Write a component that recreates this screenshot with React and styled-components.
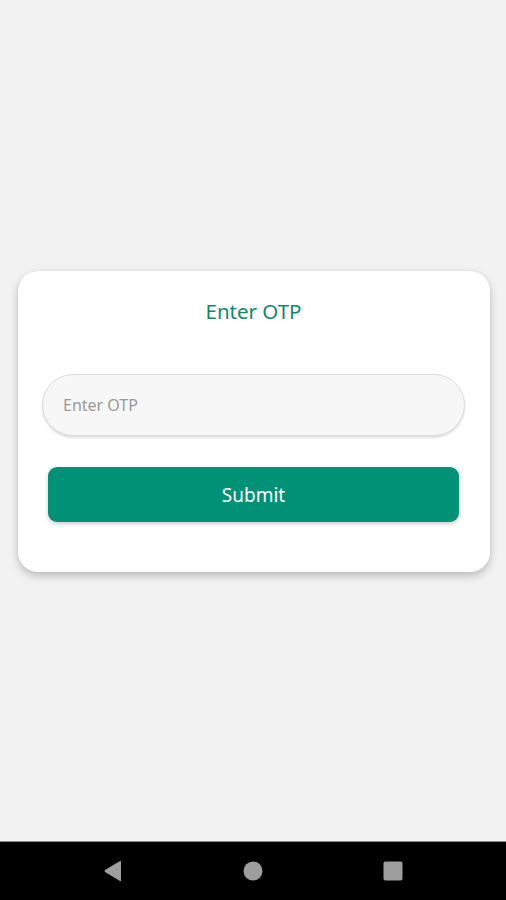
import React from "react";
import styled, { createGlobalStyle } from "styled-components";

const Global = createGlobalStyle`
  html, body { margin: 0; padding: 0; background: #f2f2f2; }
  body { font-family: "Noto Sans", "Open Sans", sans-serif; }
  * { box-sizing: border-box; }
`;

const Screen = styled.div`
  height: 900px;
  display: flex;
  flex-direction: column;
`;

const Main = styled.main`
  flex: 1;
  display: flex;
  align-items: center;
  justify-content: center;
  padding: 2px 16px 0 18px;
`;

const Card = styled.div`
  width: 472px;
  background: #ffffff;
  border-radius: 20px;
  padding: 27px 25px 50px 24px;
  display: flex;
  flex-direction: column;
  box-shadow: 0 4px 8px rgba(0, 0, 0, 0.22), 0 0 3px rgba(0, 0, 0, 0.06);
`;

const Title = styled.h1`
  margin: 0 0 50px;
  text-align: center;
  font-size: 20.5px;
  line-height: 26px;
  font-weight: 400;
  color: #10896a;
`;

const Input = styled.input`
  height: 62px;
  width: 100%;
  border-radius: 31px;
  border: 1px solid #dcdcdc;
  background: #f7f7f7;
  padding: 0 20px;
  font-family: inherit;
  font-size: 16px;
  color: #333;
  outline: none;
  box-shadow: 0 2px 2px rgba(0, 0, 0, 0.12);
  &::placeholder { color: #9a9a9a; }
`;

const Button = styled.button`
  margin: 31px 6px 0 6px;
  height: 55px;
  border: none;
  border-radius: 9px;
  background: #009177;
  color: #ffffff;
  font-family: inherit;
  font-size: 19px;
  box-shadow: 0 2px 4px rgba(0, 0, 0, 0.2);
  cursor: pointer;
`;

const NavBar = styled.nav`
  height: 59px;
  background: #000;
  border-top: 1px solid #8a8a8a;
  display: flex;
  align-items: center;
  justify-content: center;
`;

const NavSlot = styled.div`
  width: 140px;
  display: flex;
  justify-content: center;
  align-items: center;
`;

export default function App() {
  return (
    <>
      <Global />
      <Screen>
        <Main>
          <Card>
            <Title>Enter OTP</Title>
            <Input placeholder="Enter OTP" />
            <Button>Submit</Button>
          </Card>
        </Main>
        <NavBar>
          <NavSlot>
            <svg width="20" height="22" viewBox="0 0 20 22">
              <path d="M18 1.5 L18 20.5 Q18 21.5 17 21 L2 12 Q1 11 2 10 L17 1 Q18 0.5 18 1.5 Z" fill="#9e9e9e" />
            </svg>
          </NavSlot>
          <NavSlot>
            <svg width="20" height="20" viewBox="0 0 20 20">
              <circle cx="10" cy="10" r="9.5" fill="#9e9e9e" />
            </svg>
          </NavSlot>
          <NavSlot>
            <svg width="20" height="20" viewBox="0 0 20 20">
              <rect x="0.5" y="0.5" width="19" height="19" rx="2" fill="#9e9e9e" />
            </svg>
          </NavSlot>
        </NavBar>
      </Screen>
    </>
  );
}
